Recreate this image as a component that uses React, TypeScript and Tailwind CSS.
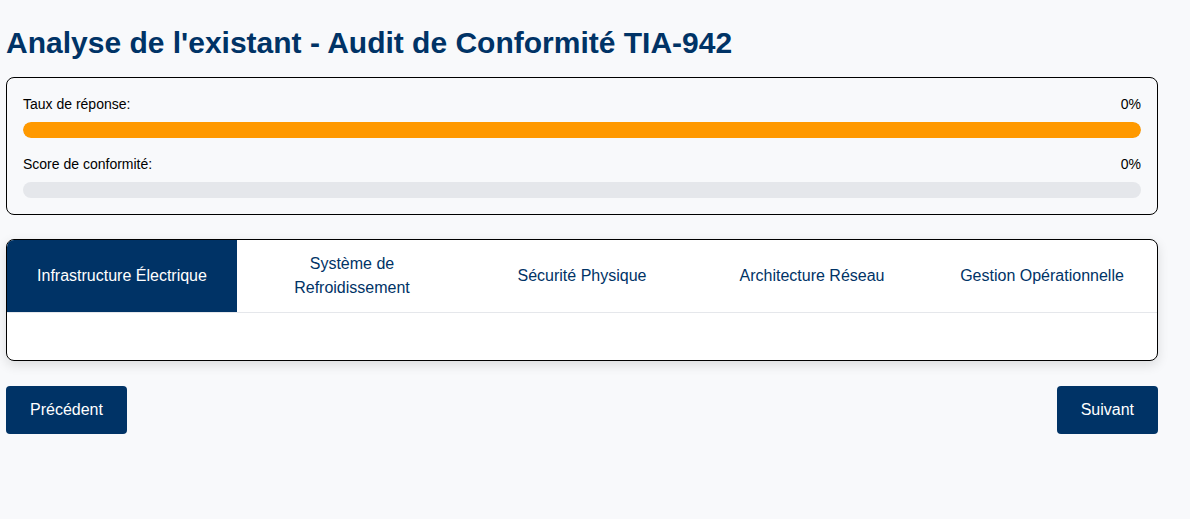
import React from "react";

const tabs = [
  "Infrastructure Électrique",
  "Système de Refroidissement",
  "Sécurité Physique",
  "Architecture Réseau",
  "Gestion Opérationnelle",
];

function Progress({ label, value, color, fill }: { label: string; value: string; color: string; fill: number }) {
  return (
    <div>
      <div className="flex justify-between text-[14px] leading-[20px] text-black">
        <span>{label}</span>
        <span>{value}</span>
      </div>
      <div className="mt-2 h-4 w-full rounded-full bg-[#e5e7eb] overflow-hidden">
        <div className={`h-full rounded-full ${color}`} style={{ width: `${fill}%` }} />
      </div>
    </div>
  );
}

export default function App() {
  return (
    <div className="min-h-[519px] bg-[#f8f9fb] font-['Liberation_Sans',Arial,sans-serif]">
      <div className="w-[1152px] ml-[6px] pt-[25px]">
        <h1 className="text-[30px] leading-[36px] font-bold text-[#003366] mb-[16px]">
          Analyse de l'existant - Audit de Conformité TIA-942
        </h1>
        <div className="rounded-lg border border-black p-4 flex flex-col gap-4">
          <Progress label="Taux de réponse:" value="0%" color="bg-[#ff9900]" fill={100} />
          <Progress label="Score de conformité:" value="0%" color="bg-[#ff9900]" fill={0} />
        </div>
        <div className="mt-6 rounded-lg border border-black bg-white shadow-[0_4px_12px_rgba(0,0,0,0.12)] overflow-hidden">
          <div className="grid grid-cols-5 border-b border-[#e5e7eb]">
            {tabs.map((t, i) => (
              <div
                key={t}
                className={`h-[72px] flex items-center justify-center text-center text-[16px] leading-[24px] px-5 ${
                  i === 0 ? "bg-[#003366] text-white" : "text-[#003366]"
                }`}
              >
                {t}
              </div>
            ))}
          </div>
          <div className="h-[47px]" />
        </div>
        <div className="mt-[25px] flex justify-between">
          <button className="h-12 px-6 rounded bg-[#003366] text-white text-[16px]">Précédent</button>
          <button className="h-12 px-6 rounded bg-[#003366] text-white text-[16px]">Suivant</button>
        </div>
      </div>
    </div>
  );
}
